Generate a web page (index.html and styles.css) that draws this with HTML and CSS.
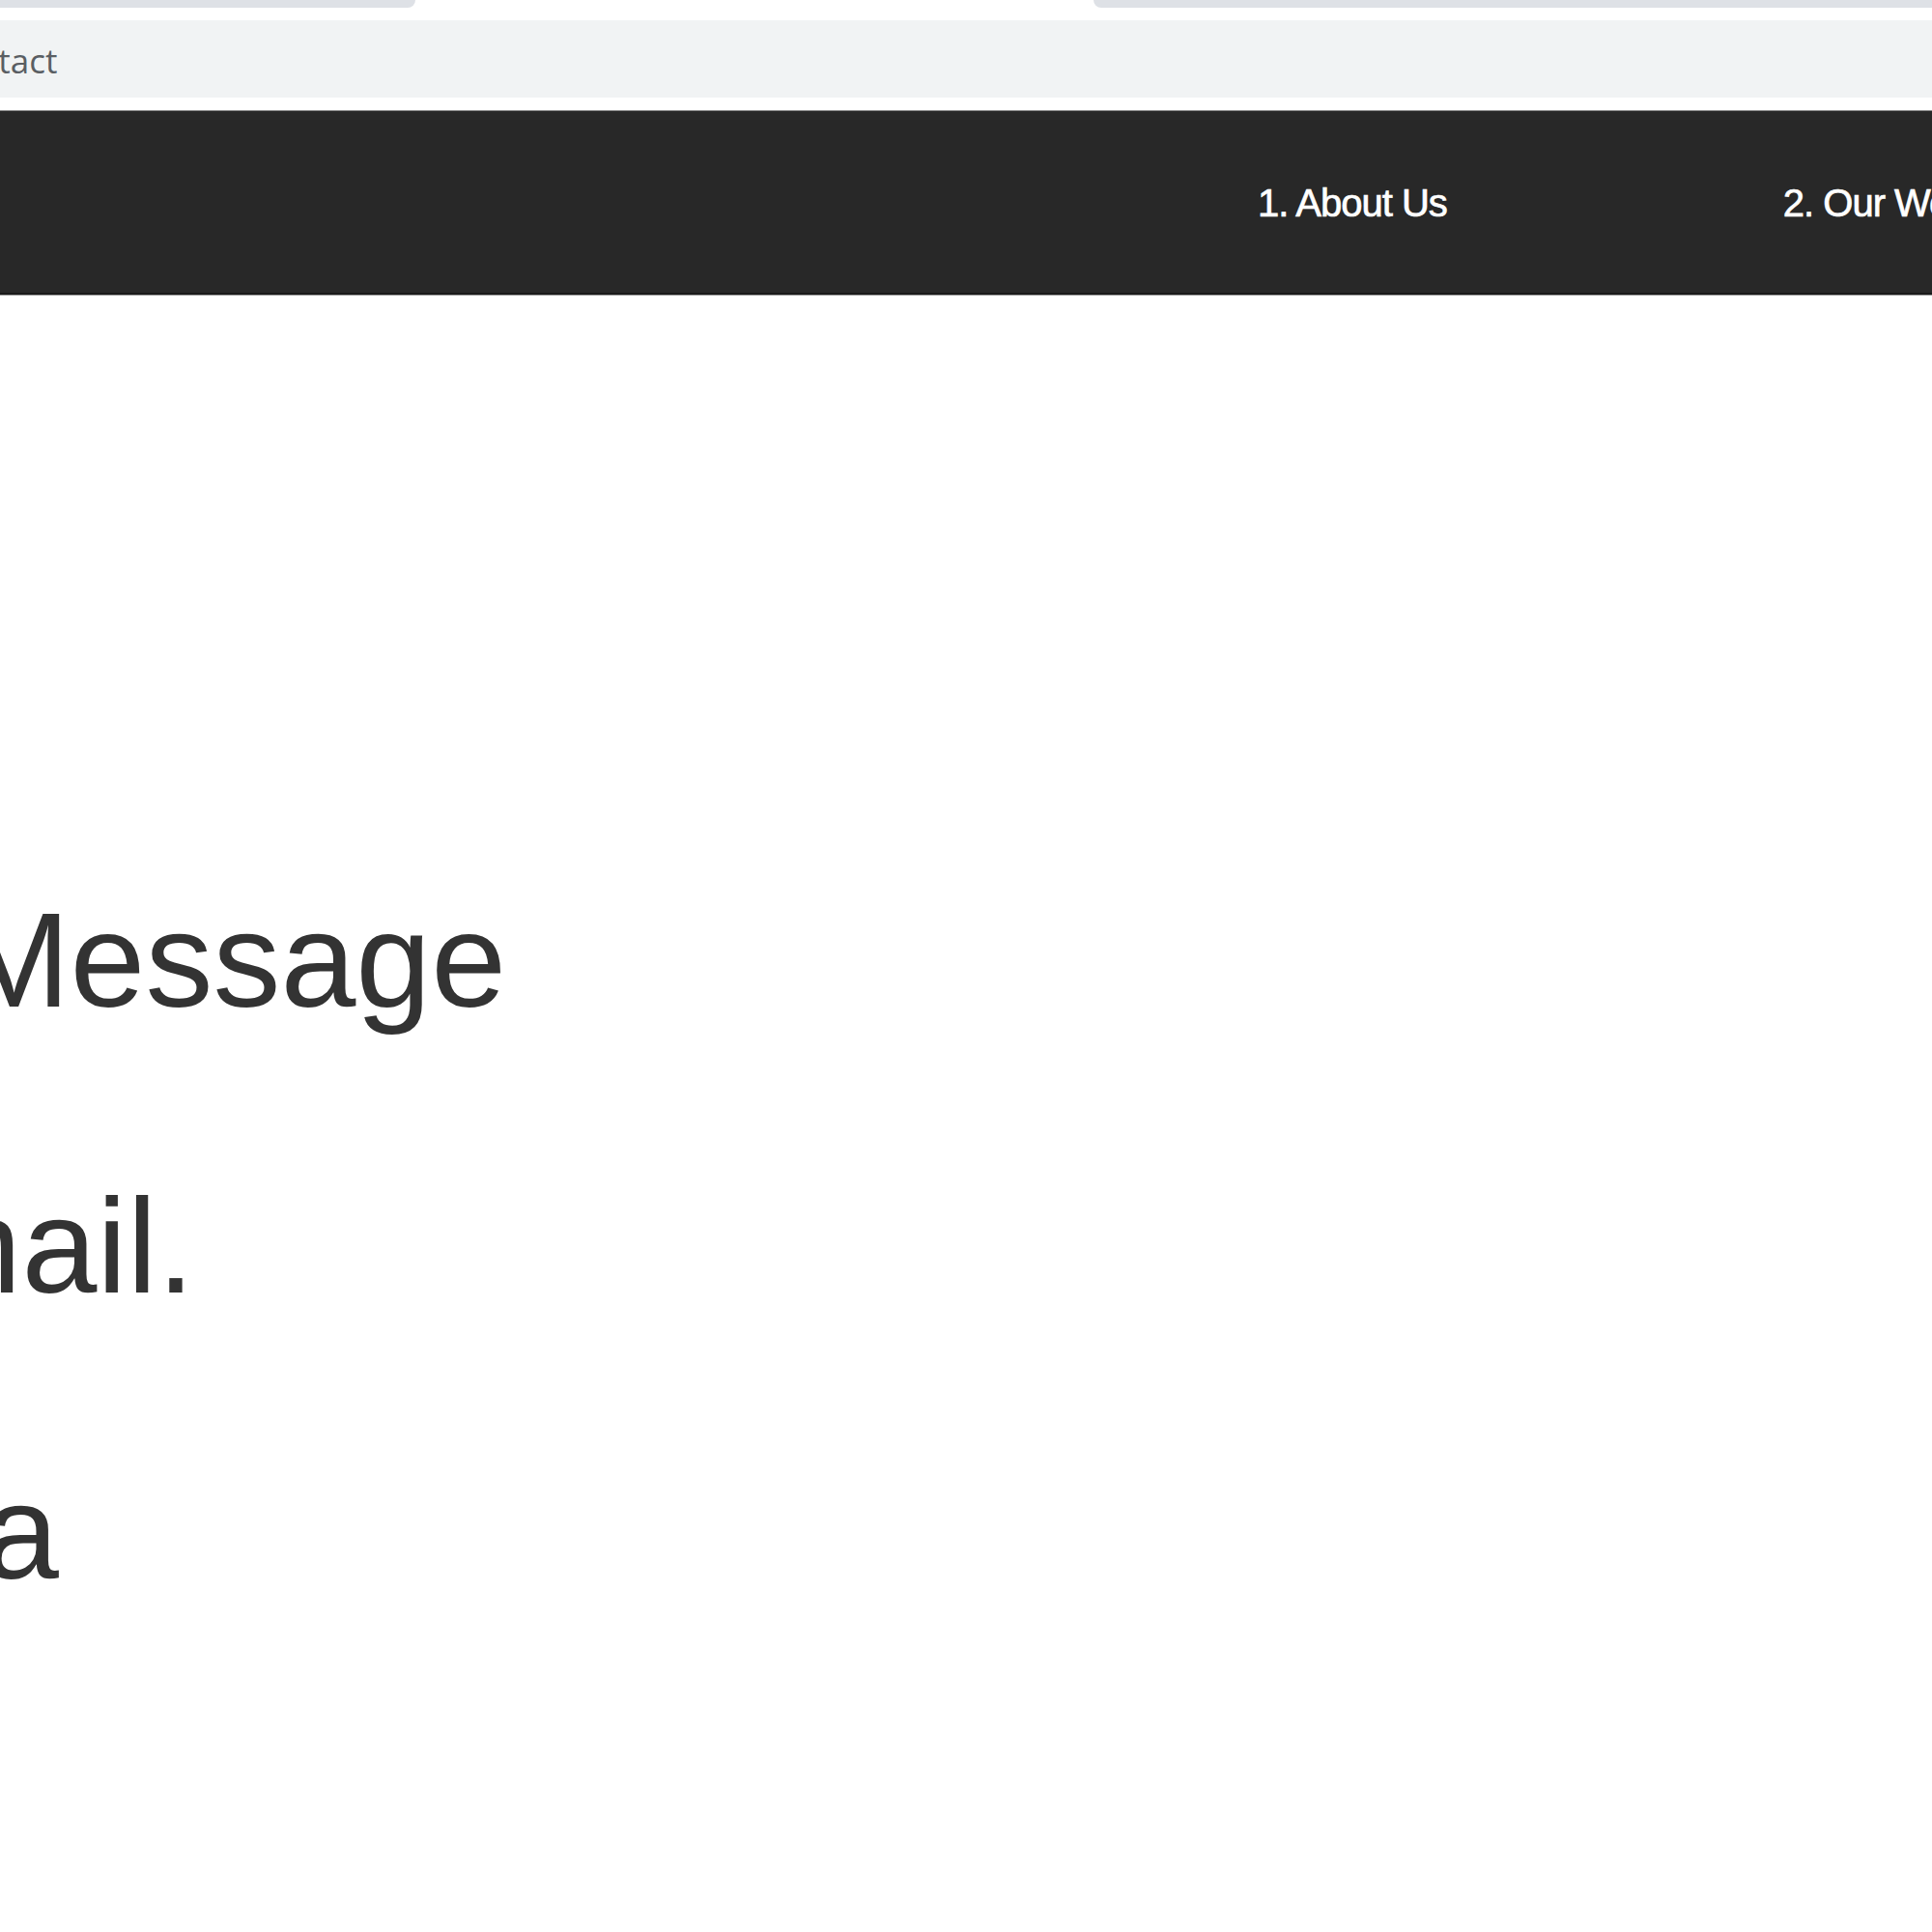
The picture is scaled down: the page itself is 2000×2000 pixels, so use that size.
FILE: index.html
```html
<!DOCTYPE html>
<html lang="en">
<head>
<meta charset="utf-8">
<title>Contact</title>
<link rel="stylesheet" href="styles.css">
</head>
<body>
  <div class="chrome">
    <div class="tabstrip">
      <div class="tab tab-left"></div>
      <div class="tab tab-right"></div>
    </div>
    <div class="addressbar"><span class="url">contact</span></div>
  </div>
  <nav class="navbar">
    <div class="nav-spacer"></div>
    <ul class="nav-list">
      <li class="nav-item">1. About Us</li>
      <li class="nav-item">2. Our Work</li>
    </ul>
  </nav>
  <main class="content">
    <div class="line line-1">Message</div>
    <div class="line line-2">email.</div>
    <div class="line line-3">a</div>
  </main>
</body>
</html>
```
FILE: styles.css
```css
html, body {
  margin: 0;
  padding: 0;
  background: #ffffff;
  width: 2000px;
  height: 2000px;
  overflow: hidden;
}

.chrome {
  display: flex;
  flex-direction: column;
}

.tabstrip {
  height: 21px;
  display: flex;
  align-items: flex-start;
  background: #ffffff;
}

.tab {
  height: 8px;
  background: #dee1e6;
}

.tab-left {
  width: 430px;
  border-bottom-right-radius: 10px;
}

.tab-right {
  flex: 1;
  margin-left: 702px;
  border-bottom-left-radius: 10px;
}

.addressbar {
  height: 80px;
  background: #f1f3f4;
  display: flex;
  align-items: center;
  overflow: hidden;
}

.url {
  font-family: "Open Sans", "Noto Sans", sans-serif;
  font-size: 35px;
  color: #5a5e63;
  margin-left: -61px;
  line-height: 1;
  padding-top: 2px;
}

.navbar {
  margin-top: 13px;
  height: 188px;
  background: #282828;
  border-top: 1px solid #8a8a8a;
  border-bottom: 2px solid #1a1a1a;
  box-shadow: 0 1px 0 #9a9a9a;
  display: flex;
  align-items: center;
  overflow: hidden;
}

.nav-spacer {
  width: 1302px;
  flex: none;
}

.nav-list {
  list-style: none;
  margin: 0;
  padding: 0;
  display: flex;
  gap: 348px;
  white-space: nowrap;
}

.nav-item {
  font-family: "Liberation Sans", Arial, sans-serif;
  font-size: 40px;
  letter-spacing: -1px;
  color: #ffffff;
  line-height: 1;
  padding-top: 2px;
  -webkit-text-stroke: 0.7px #ffffff;
}

.content {
  margin-top: 541px;
  font-family: "Liberation Sans", Arial, sans-serif;
  font-size: 140px;
  color: #333333;
  overflow: hidden;
  white-space: nowrap;
}

.line {
  line-height: 296px;
  height: 296px;
}

.line-1 { text-indent: -44px; }
.line-2 { text-indent: -172px; }
.line-3 { text-indent: -17px; }
```
